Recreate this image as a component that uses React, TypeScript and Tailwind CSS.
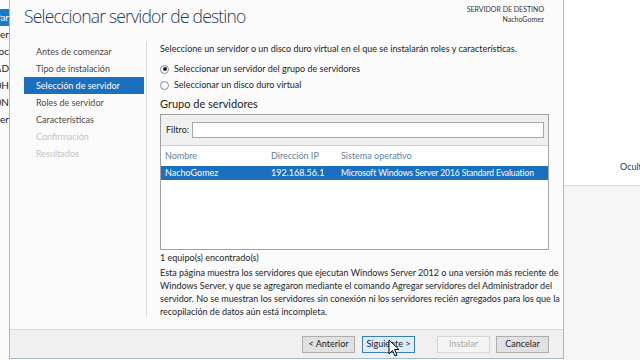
import React from 'react';

const navItems = [
  { label: 'Antes de comenzar', state: 'done' },
  { label: 'Tipo de instalación', state: 'done' },
  { label: 'Selección de servidor', state: 'active' },
  { label: 'Roles de servidor', state: 'done' },
  { label: 'Características', state: 'done' },
  { label: 'Confirmación', state: 'off' },
  { label: 'Resultados', state: 'off' },
];

const behind = ['Par', 'er', 'oc', 'AD', '0H', '0N', 'er'];

const paragraph = [
  'Esta página muestra los servidores que ejecutan Windows Server 2012 o una versión más reciente de',
  'Windows Server, y que se agregaron mediante el comando Agregar servidores del Administrador del',
  'servidor. No se muestran los servidores sin conexión ni los servidores recién agregados para los que la',
  'recopilación de datos aún está incompleta.',
];

const Radio: React.FC<{ checked?: boolean; label: string }> = ({ checked, label }) => (
  <div className="flex items-center h-[16px]">
    <span className="w-[9px] h-[9px] rounded-full border border-[#8a8a8a] bg-white flex items-center justify-center">
      {checked && <span className="w-[4px] h-[4px] rounded-full bg-[#222]" />}
    </span>
    <span className="ml-[5px]">{label}</span>
  </div>
);

const Btn: React.FC<{ label: string; variant?: 'default' | 'focus' | 'disabled' }> = ({ label, variant = 'default' }) => {
  const cls =
    variant === 'focus'
      ? 'border-[#3c7fb1] bg-[#dcecfc] text-[#222]'
      : variant === 'disabled'
        ? 'border-[#d5d5d5] bg-[#f4f4f4] text-[#a8a8a8]'
        : 'border-[#adadad] bg-[#e1e1e1] text-[#222]';
  return (
    <div className={`w-[53px] h-[17px] border flex items-center justify-center ${cls}`}>{label}</div>
  );
};

export default function App() {
  return (
    <div
      className="relative w-[640px] h-[360px] overflow-hidden bg-white flex text-[9px] text-[#1e1e1e]"
      style={{ fontFamily: 'Lato, "Open Sans", sans-serif' }}
    >
      {/* window behind, left edge */}
      <div className="w-[9px] shrink-0 bg-[#fbfbfb] pt-[9px] overflow-hidden">
        {behind.map((t, i) => (
          <div
            key={i}
            className={`h-[17px] flex items-center justify-end text-[10px] whitespace-nowrap ${i === 0 ? 'bg-[#1979ca] text-white' : 'text-[#222]'}`}
          >
            {t}
          </div>
        ))}
      </div>

      {/* wizard window */}
      <div className="w-[555px] shrink-0 h-[359px] border-x border-b border-[#9dbad6] bg-[#fbfbfb] flex flex-col">
        <div className="h-[42px] flex justify-between">
          <div
            className="pl-[14px] pt-[3px] text-[17.5px] font-light tracking-[-0.8px] text-[#1f3a52] leading-[26px]"
            style={{ fontFamily: '"Open Sans", Lato, sans-serif' }}
          >
            Seleccionar servidor de destino
          </div>
          <div className="pr-[19px] pt-[4px] text-right text-[7px] leading-[10px] text-[#333]">
            <div>SERVIDOR DE DESTINO</div>
            <div>NachoGomez</div>
          </div>
        </div>

        <div className="flex-1 flex">
          <div className="w-[137px] shrink-0 pl-[14px] pr-[2px] pt-[1px] mb-[13px] border-r border-[#d9d9d9]">
            {navItems.map((n) => (
              <div
                key={n.label}
                className={`h-[17px] pl-[12px] flex items-center ${
                  n.state === 'active'
                    ? 'bg-[#1a6fbf] text-white'
                    : n.state === 'off'
                      ? 'text-[#c4c4c4]'
                      : 'text-[#4a4a4a]'
                }`}
              >
                {n.label}
              </div>
            ))}
          </div>

          <div className="w-[389px] ml-[13px] flex flex-col">
            <div className="h-[13px] leading-[13px]">
              Seleccione un servidor o un disco duro virtual en el que se instalarán roles y características.
            </div>
            <div className="mt-[6px]">
              <Radio checked label="Seleccionar un servidor del grupo de servidores" />
              <Radio label="Seleccionar un disco duro virtual" />
            </div>
            <div className="mt-[4px] text-[11px] leading-[14px] text-[#222]">Grupo de servidores</div>
            <div className="mt-[3px] h-[136px] border border-[#a0a0a0] flex flex-col">
              <div className="h-[31px] bg-[#f0f0f0] flex items-center pl-[5px] pr-[4px] border-b border-[#d0d0d0]">
                <span>Filtro:</span>
                <div className="ml-[3px] flex-1 h-[16px] bg-white border border-[#a8a8a8]" />
              </div>
              <div className="flex-1 bg-white">
                <div className="h-[20px] flex items-center text-[#5a7fa0]">
                  <span className="w-[110px] shrink-0 pl-[4px]">Nombre</span>
                  <span className="w-[70px] shrink-0">Dirección IP</span>
                  <span>Sistema operativo</span>
                </div>
                <div className="h-[14px] flex items-center bg-[#1a6fbf] text-white">
                  <span className="w-[110px] shrink-0 pl-[4px]">NachoGomez</span>
                  <span className="w-[70px] shrink-0">192.168.56.1</span>
                  <span className="whitespace-nowrap text-[8.5px] tracking-[-0.1px]">
                    Microsoft Windows Server 2016 Standard Evaluation
                  </span>
                </div>
              </div>
            </div>
            <div className="mt-[1px] leading-[13px]">1 equipo(s) encontrado(s)</div>
            <div className="mt-[2px] leading-[13px] whitespace-nowrap">
              {paragraph.map((l) => (
                <div key={l}>{l}</div>
              ))}
            </div>
          </div>
        </div>

        <div className="h-[29px] bg-[#f0f0f0] border-t border-[#dcdcdc] flex items-center justify-end pr-[14px] text-[9px]">
          <Btn label="< Anterior" />
          <div className="ml-[7px]">
            <Btn label="Siguiente >" variant="focus" />
          </div>
          <div className="ml-[22px]">
            <Btn label="Instalar" variant="disabled" />
          </div>
          <div className="ml-[6px]">
            <Btn label="Cancelar" />
          </div>
        </div>
      </div>

      {/* background on the right */}
      <div className="flex-1 flex flex-col">
        <div className="h-[186px] bg-white border-b border-[#d8d8d8] flex items-end pb-[12px] pl-[56px] text-[9px] text-[#333] whitespace-nowrap">
          Ocultar
        </div>
        <div className="flex-1 bg-[#f6f6f6]" />
      </div>

      {/* mouse cursor */}
      <svg className="absolute left-[388px] top-[339px]" width="12" height="19" viewBox="0 0 12 19">
        <path d="M1 1 L1 15 L4.5 11.5 L7 17 L9 16 L6.5 10.5 L11 10.5 Z" fill="white" stroke="black" strokeWidth="1" strokeLinejoin="round" />
      </svg>
    </div>
  );
}
